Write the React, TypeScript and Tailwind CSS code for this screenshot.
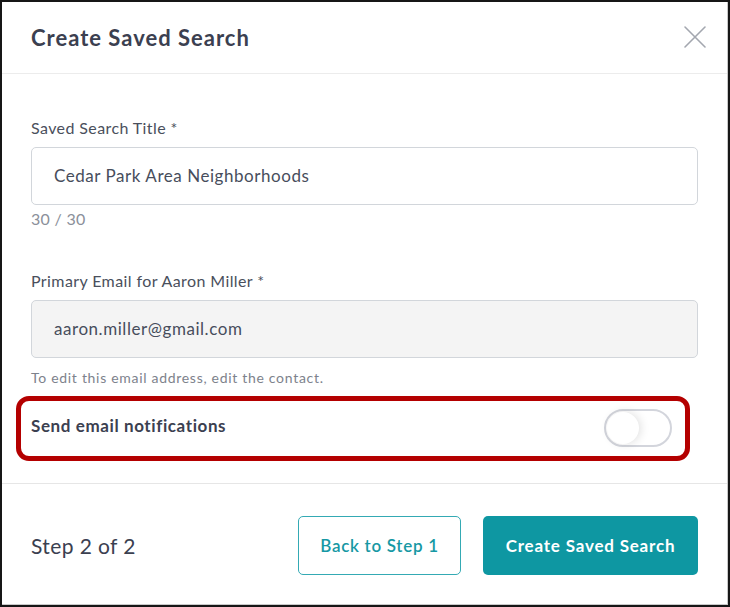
import React, { useState } from "react";

const font = { fontFamily: "Lato, 'Open Sans', sans-serif" };

function CloseIcon() {
  return (
    <svg width="24" height="24" viewBox="0 0 24 24" fill="none" aria-hidden="true">
      <path d="M2 2L22 22M22 2L2 22" stroke="#a3a7af" strokeWidth="1.6" strokeLinecap="round" />
    </svg>
  );
}

function Toggle({ on, onChange }: { on: boolean; onChange: (v: boolean) => void }) {
  return (
    <button
      type="button"
      role="switch"
      aria-checked={on}
      onClick={() => onChange(!on)}
      className="relative h-[38px] w-[68px] shrink-0 rounded-full border-2 border-[#d3d5dc] bg-white"
    >
      <span
        className={`absolute top-[1px] h-[32px] w-[32px] rounded-full bg-white shadow-[2px_0_10px_rgba(0,0,0,0.12)] transition-all ${
          on ? "left-[31px]" : "left-[1px]"
        }`}
      />
    </button>
  );
}

export default function App() {
  const [notify, setNotify] = useState(false);

  return (
    <div className="h-[607px] w-[730px] border-2 border-[#161616] bg-white" style={font}>
      <div className="flex h-full flex-col border-b border-r border-[#c9c9c9]">
        <header className="flex h-[72px] shrink-0 items-center justify-between border-b border-[#ececec] pl-[29px] pr-[20px]">
          <h1 className="text-[22px] font-bold tracking-[1px] text-[#3b4050]">Create Saved Search</h1>
          <button type="button" className="mt-[-2px]" aria-label="Close">
            <CloseIcon />
          </button>
        </header>

        <div className="flex-1 px-[29px] pt-[44px]">
          <label className="block text-[16px] leading-[20px] tracking-[0.4px] text-[#4a4f5c]">
            Saved Search Title *
          </label>
          <div className="mt-[9px] flex h-[58px] items-center rounded-[5px] border border-[#d2d6db] px-[22px] text-[17px] tracking-[0.55px] text-[#474d5c]">
            Cedar Park Area Neighborhoods
          </div>
          <p className="mt-[2px] text-[16px] leading-[24px] tracking-[0.3px] text-[#8b909a]">30 / 30</p>

          <label className="mt-[40px] block text-[16px] leading-[20px] tracking-[0.4px] text-[#4a4f5c]">
            Primary Email for Aaron Miller *
          </label>
          <div className="mt-[9px] flex h-[58px] items-center rounded-[5px] border border-[#d2d6db] bg-[#f4f4f4] px-[22px] text-[17px] tracking-[0.55px] text-[#474d5c]">
            aaron.miller@gmail.com
          </div>
          <p className="mt-[10px] text-[14px] leading-[20px] tracking-[0.7px] text-[#7d828c]">
            To edit this email address, edit the contact.
          </p>

          <div className="-ml-[15px] mt-[8px] flex h-[65px] w-[674px] items-center justify-between rounded-[13px] border-[5px] border-[#b40000] pl-[10px] pr-[13px]">
            <span className="mt-[-5px] text-[17px] font-bold tracking-[0.6px] text-[#3b4050]">
              Send email notifications
            </span>
            <div className="mt-[3px]">
              <Toggle on={notify} onChange={setNotify} />
            </div>
          </div>
        </div>

        <footer className="flex h-[121px] shrink-0 items-center justify-between border-t border-[#e6e6e6] pl-[29px] pr-[29px]">
          <span className="mt-[3px] text-[21px] tracking-[0.4px] text-[#3b4050]">Step 2 of 2</span>
          <div className="mt-[3px] flex gap-[22px]">
            <button
              type="button"
              className="h-[59px] w-[163px] rounded-[5px] border border-[#34aab4] text-[17px] font-semibold tracking-[0.7px] text-[#1698a4]"
            >
              Back to Step 1
            </button>
            <button
              type="button"
              className="h-[59px] w-[215px] rounded-[5px] bg-[#0e97a2] text-[17px] font-bold tracking-[0.8px] text-white"
            >
              Create Saved Search
            </button>
          </div>
        </footer>
      </div>
    </div>
  );
}
